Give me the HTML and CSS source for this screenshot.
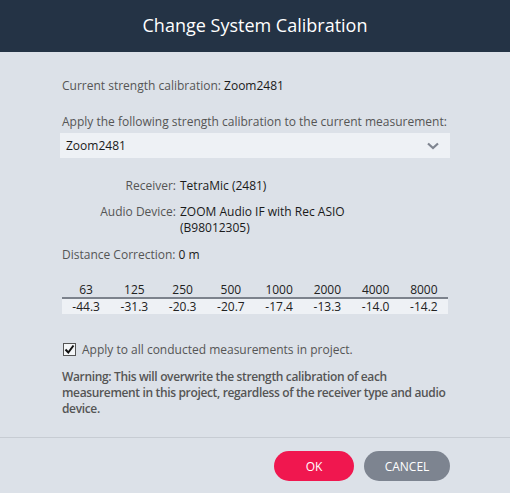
FILE: index.html
```html
<!DOCTYPE html>
<html>
<head>
<meta charset="utf-8">
<link rel="stylesheet" href="styles.css">
</head>
<body>
<div class="dialog">
  <header class="head">Change System Calibration</header>
  <main class="content">
    <p class="line current"><span class="lbl">Current strength calibration:</span> <span class="val">Zoom2481</span></p>
    <p class="line apply">Apply the following strength calibration to the current measurement:</p>
    <div class="select">
      <span class="val">Zoom2481</span>
      <svg class="chev" width="12" height="8" viewBox="0 0 12 8"><path d="M1 1.5 L6 6 L11 1.5" fill="none" stroke="#7f8590" stroke-width="2.2"/></svg>
    </div>
    <div class="info">
      <span class="k">Receiver:</span><span class="v">TetraMic (2481)</span>
      <span class="k">Audio Device:</span><span class="v">ZOOM Audio IF with Rec ASIO<br>(B98012305)</span>
    </div>
    <p class="line dist"><span class="lbl">Distance Correction:</span> <span class="val">0 m</span></p>
    <div class="table">
      <div class="row hdr"><span>63</span><span>125</span><span>250</span><span>500</span><span>1000</span><span>2000</span><span>4000</span><span>8000</span></div>
      <div class="row data"><span>-44.3</span><span>-31.3</span><span>-20.3</span><span>-20.7</span><span>-17.4</span><span>-13.3</span><span>-14.0</span><span>-14.2</span></div>
    </div>
    <label class="check"><span class="box"><svg width="11" height="11" viewBox="0 0 11 11"><path d="M1.5 5.5 L4.3 8.5 L9.5 1.5" fill="none" stroke="#111" stroke-width="2"/></svg></span>Apply to all conducted measurements in project.</label>
    <p class="warn">Warning: This will overwrite the strength calibration of each measurement in this project, regardless of the receiver type and audio device.</p>
  </main>
  <footer class="foot">
    <button class="btn ok">OK</button>
    <button class="btn cancel">CANCEL</button>
  </footer>
</div>
</body>
</html>
```
FILE: styles.css
```css
* { box-sizing: border-box; }
html, body { margin: 0; padding: 0; }
body {
  width: 510px;
  height: 493px;
  background: #dce1e8;
  font-family: "Open Sans", "Noto Sans", sans-serif;
  font-size: 12px;
  color: #222;
  overflow: hidden;
}
.dialog { display: flex; flex-direction: column; height: 493px; }
.head {
  height: 52px;
  background: #243345;
  color: #fff;
  font-size: 18px;
  display: flex;
  align-items: center;
  justify-content: center;
  padding-bottom: 2px;
}
.content { padding: 25px 60px 0 62px; flex: 1; }
.line { margin: 0; line-height: 17px; }
.lbl { color: #555; }
.val { color: #1a1a1a; }
.current { margin-bottom: 19px; }
.apply { color: #555; margin-bottom: 3px; }
.select {
  margin-left: -2px;
  height: 25px;
  background: #eef1f5;
  display: flex;
  align-items: center;
  justify-content: space-between;
  padding: 0 11px 0 6px;
}
.chev { display: block; }
.info {
  display: grid;
  grid-template-columns: 114px auto;
  column-gap: 4px;
  row-gap: 10px;
  margin-top: 20px;
  line-height: 16px;
}
.info .k { color: #555; text-align: right; }
.info .v { color: #1a1a1a; }
.dist { margin-top: 10px; }
.table { margin-top: 19px; margin-right: 2px; }
.row { display: grid; grid-template-columns: repeat(8, 1fr); text-align: center; }
.hdr { color: #222; line-height: 15px; border-bottom: 2px solid #7c828c; }
.data { background: #eef1f5; line-height: 15px; }
.check {
  display: flex;
  align-items: center;
  gap: 6px;
  margin-top: 27px;
  color: #555;
  line-height: 17px;
  margin-left: 1px;
}
.box {
  width: 13px; height: 13px;
  border: 1px solid #555;
  background: #f4f6f8;
  display: flex; align-items: center; justify-content: center;
}
.warn {
  margin: 11px 0 0;
  font-weight: 600;
  color: #555;
  line-height: 16px;
  font-size: 12px;
  letter-spacing: -0.35px;
}
.foot {
  border-top: 1px solid #c7ccd3;
  height: 56px;
  display: flex;
  justify-content: flex-end;
  align-items: flex-start;
  gap: 10px;
  padding: 13px 60px 0 0;
}
.btn {
  height: 30px;
  border: none;
  border-radius: 15px;
  color: #fff;
  font-family: "Open Sans", "Noto Sans", sans-serif;
  font-size: 12px;
}
.ok { width: 80px; background: #f0174f; }
.cancel { width: 86px; background: #7d8490; }
```
